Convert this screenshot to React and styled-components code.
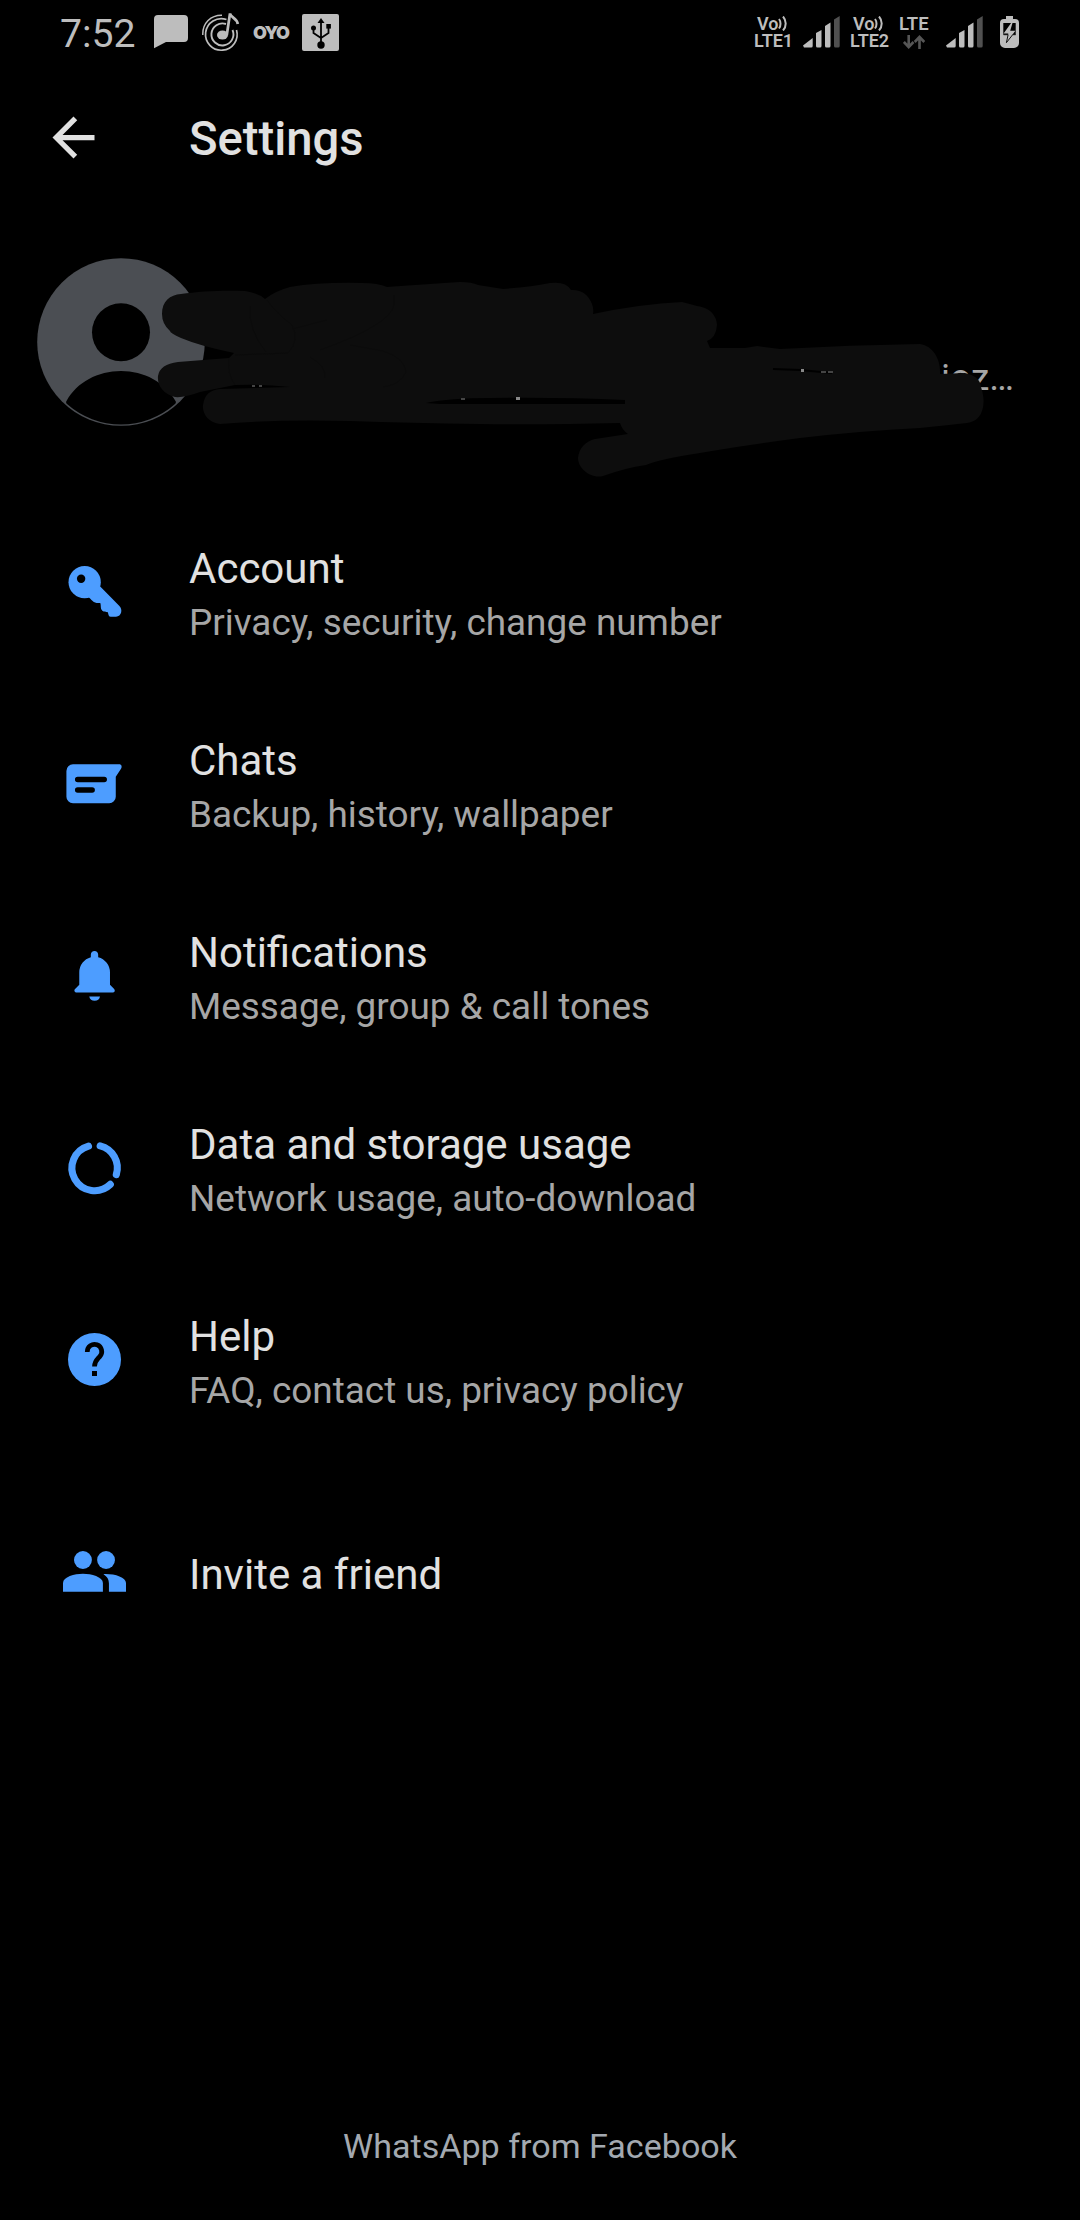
import React from 'react';
import styled, { createGlobalStyle } from 'styled-components';

const BLUE = '#4d9dff';
const SCRIBBLE = '#0d0d0d';

const items = [
  { icon: KeyIcon, title: 'Account', desc: 'Privacy, security, change number' },
  { icon: ChatIcon, title: 'Chats', desc: 'Backup, history, wallpaper' },
  { icon: BellIcon, title: 'Notifications', desc: 'Message, group & call tones' },
  { icon: DataIcon, title: 'Data and storage usage', desc: 'Network usage, auto-download' },
  { icon: HelpIcon, title: 'Help', desc: 'FAQ, contact us, privacy policy' },
];

const App = () => {
  return (
    <>
      <GlobalStyle />
      <Screen>
        <StatusBar />
        <AppBar>
          <BackButton aria-label="Back">
            <svg width="63" height="63" viewBox="0 0 24 24" fill="#e1e1e1">
              <path d="M20 11H7.83l5.59-5.59L12 4l-8 8 8 8 1.41-1.41L7.83 13H20v-2z" />
            </svg>
          </BackButton>
          <PageTitle>Settings</PageTitle>
        </AppBar>
        <Profile />
        <List>
          {items.map(({ icon: Icon, title, desc }) => (
            <Item key={title}>
              <Icon />
              <ItemText>
                <ItemTitle>{title}</ItemTitle>
                <ItemDesc>{desc}</ItemDesc>
              </ItemText>
            </Item>
          ))}
          <InviteItem>
            <FriendsIcon />
            <ItemText>
              <ItemTitle>Invite a friend</ItemTitle>
            </ItemText>
          </InviteItem>
        </List>
        <Footer>WhatsApp from Facebook</Footer>
      </Screen>
    </>
  );
};

function StatusBar() {
  return (
    <StatusRow>
      <Clock>7:52</Clock>
      <Notices>
        <svg width="35" height="34" viewBox="0 0 35 34" fill="#bdbdbd">
          <path d="M4 0h26a4 4 0 0 1 4 4v19a4 4 0 0 1-4 4H12L0 33.3V4a4 4 0 0 1 4-4z" />
        </svg>
        <MusicIcon />
        <Oyo>OYO</Oyo>
        <UsbIcon />
      </Notices>
      <Network>
        <VoLte sim="1" />
        <Signal />
        <VoLte sim="2" />
        <Lte>
          <LteLabel>LTE</LteLabel>
          <svg width="22" height="14" viewBox="0 0 22 14" fill="none" stroke="#555" strokeWidth="2.6">
            <path d="M5.7 0v12M.9 7l4.8 5 4.8-5M16.5 14V2M11.7 7l4.8-5 4.8 5" />
          </svg>
        </Lte>
        <Signal />
        <Battery />
      </Network>
    </StatusRow>
  );
}

function Battery() {
  return (
    <BatterySvg width="19" height="32" viewBox="0 0 19 32">
      <path
        d="M6 0h7v3h2a4 4 0 0 1 4 4v20a5 5 0 0 1-5 5H5a5 5 0 0 1-5-5V7a4 4 0 0 1 4-4h2z"
        fill="#bdbdbd"
      />
      <path d="M3.3 7h12.4v11.7H3.3z" fill="#000" />
      <path d="M11.8 6L3.6 17.5h4.700L6.400 26.700l9-12h-5.200L12.800 6z" fill="#bdbdbd" />
      <path d="M3.600 18.700h4.500l-1.700 8 6.300-8h3" fill="none" stroke="#111" strokeWidth="1" />
    </BatterySvg>
  );
}

function VoLte({ sim }) {
  return (
    <VoBox>
      <VoLine>
        Vo
        <svg width="10" height="15" viewBox="0 0 10 15" fill="none" stroke="#bdbdbd" strokeWidth="2">
          <path d="M1 3c2 2.5 2 7 0 9.500M5 .5c3.600 4 3.600 10 0 14" />
        </svg>
      </VoLine>
      <div>LTE{sim}</div>
    </VoBox>
  );
}

function Signal() {
  return (
    <svg width="37" height="32" viewBox="0 0 37 32" fill="#bdbdbd">
      <path d="M0 29.500L9.700 22v8a1.500 1.500 0 0 1-1.500 1.500H1z" />
      <path d="M13 17l5.500-3v16a1.500 1.500 0 0 1-1.500 1.500h-2.500A1.500 1.500 0 0 1 13 30z" />
      <path d="M22 10l5.500-3.500V30a1.500 1.500 0 0 1-1.500 1.500h-2.500A1.500 1.500 0 0 1 22 30z" />
      <path d="M31 3.500L36.700 0v30a1.500 1.500 0 0 1-1.500 1.500h-2.700A1.500 1.500 0 0 1 31 30z" fill="#505050" />
    </svg>
  );
}

function MusicIcon() {
  return (
    <svg width="38" height="40" viewBox="0 0 38 40" fill="none" stroke="#bdbdbd">
      <path d="M.8 23C.3 11 9 3 20 3.200" strokeWidth="1.500" />
      <path d="M24.500 7.500A15.800 15.800 0 1 0 34.500 18" strokeWidth="1.700" />
      <path d="M24 12A11 11 0 1 0 30.500 18" strokeWidth="1.900" />
      <ellipse cx="20.500" cy="23" rx="5.500" ry="4.500" fill="#bdbdbd" stroke="none" />
      <path d="M24.800 23L28 1.500c.5 4 7 4.500 7.800 10.500" strokeWidth="2.700" />
    </svg>
  );
}

function UsbIcon() {
  return (
    <svg width="37" height="37" viewBox="0 0 37 37">
      <rect width="37" height="37" rx="2" fill="#bdbdbd" />
      <path d="M19 31V7M11.500 14v5l7.500 5M26.500 12v7L19 24" fill="none" stroke="#000" strokeWidth="1.800" />
      <path d="M19 4l3.500 5h-7z" />
      <circle cx="19" cy="31" r="3.700" />
      <circle cx="11.500" cy="14" r="2.500" />
      <path d="M24.300 10h4.600v4.600h-4.600z" />
    </svg>
  );
}

function Profile() {
  return (
    <ProfileRow>
      <svg width="168" height="168" viewBox="0 0 168 168">
        <circle cx="84" cy="84" r="83.800" fill="#4b4e53" />
        <circle cx="84" cy="74.300" r="29" fill="#000" />
        <path d="M29.500 143C40 124 61 113 84 113s44 11 54.500 30q1 1.500-.5 3A81.500 81.500 0 0 1 30 146q-1.500-1.500-.5-3z" fill="#000" />
      </svg>
      <AboutText>ioz…</AboutText>
      <Scribble viewBox="150 270 850 220">
        <path
          fill={SCRIBBLE}
          d="M162 314C162 301 170 295 181 294C200 291 225 290 245 291Q258 293 265 299Q275 291 290 287Q320 282 362 283Q378 283 387 287Q430 284 460 282Q472 282 478 285L503 289Q530 287 550 283Q566 281 571 290Q586 289 592 304Q594 309 593 314Q640 304 682 302Q690 304 697 306C713 308 717 319 717 325Q716 338 707 341L710 348L745 348L757 346L780 349Q850 345 920 344C934 346 941 361 940 374L965 373Q980 376 981 387C988 408 980 422 967 423Q950 425 920 428Q860 431 800 438Q740 446 700 453Q660 459 646 465Q625 468 603 476C590 479 578 468 578 458C579 448 586 441 595 439L628 434Q622 430 620 423Q540 425 480 424Q410 423 350 421Q280 419 220 424C209 423 202 414 203 405Q205 390 220 389L290 387Q263 384 235 385L200 392Q184 398 175 397C163 394 157 385 158 376Q160 364 178 362L229 358L234 353Q200 346 181 338Q170 333 170 331Q162 324 162 314Z"
        />
        <path d="M426 403Q450 398 490 398Q560 397 625 400V404H440Z" fill="#000" />
        <path d="M773 369L800 370L832 373" stroke="#000" strokeWidth="2" fill="none" />
        <g fill="none" stroke="#0b0b0b">
          <path d="M250 306Q248 330 266 352M267 300Q276 313 292 325Q300 340 288 353L235 355M292 329L327 320M320 350Q390 325 394 305V295M350 345L383 351Q405 358 406 372Q400 385 383 387" />
          <path d="M229 358Q227 374 235 385M310 357Q326 366 325 378" />
        </g>
        <path d="M252 386h3M259 386h3M461 399h4M821 372h5M828 372h5" stroke="#444" strokeWidth="2" />
        <path d="M516 398.500h4M801 370.500h3" stroke="#888" strokeWidth="3" />
      </Scribble>
    </ProfileRow>
  );
}

function KeyIcon() {
  return (
    <ItemIcon viewBox="0 0 24 24">
      <circle cx="8.250" cy="8.450" r="6.150" />
      <path d="M14 9.900l7.400 7.500c1.500 1.500.9 4-1.200 4.200h-2c-.8 0-.9-.7-1.100-1.700-.9-.2-1.400 0-2.100-.6-.9-.7-.4-1.900-.8-2.900-1-.1-1.800.1-2.600-.5-.6-.4-.8-.9-1.800-1.700z" />
      <circle cx="6.900" cy="7.150" r="1.600" fill="#000" />
    </ItemIcon>
  );
}

function ChatIcon() {
  return (
    <ItemIcon viewBox="0 0 24 24">
      <path d="M3.800 4.700h17.600c.9 0 1.200.9.700 1.700l-2 3v7.600a2.500 2.500 0 0 1-2.500 2.500H3.800A2.500 2.500 0 0 1 1.300 17V7.200a2.500 2.500 0 0 1 2.500-2.500z" />
      <path d="M5.600 10.500h10.100M5.600 14.500h5.500" stroke="#000" strokeWidth="2.100" strokeLinecap="round" />
    </ItemIcon>
  );
}

function BellIcon() {
  return (
    <ItemIcon viewBox="0 0 24 24">
      <path d="M12 2.700c.8 0 1.400.6 1.400 1.400v.9a6 6 0 0 1 4.500 5.800v4.700l1.500 1.500c.7.700.2 1.500-.6 1.500H5.300c-.9 0-1.300-.9-.6-1.500l1.500-1.500v-4.700A6 6 0 0 1 10.600 5v-.9c0-.8.6-1.400 1.400-1.400z" />
      <path d="M10 20h4.100a2.100 2.100 0 0 1-4.100 0z" />
    </ItemIcon>
  );
}

function DataIcon() {
  return (
    <ItemIcon viewBox="0 0 24 24">
      <g fill="none" stroke={BLUE} strokeWidth="2.700" strokeLinecap="round">
        <path d="M9.720 3.850A8.650 8.650 0 1 0 18.030 18.430" />
        <path d="M14.150 3.780A8.650 8.650 0 0 1 20.300 14.730" />
      </g>
    </ItemIcon>
  );
}

function HelpIcon() {
  return (
    <ItemIcon viewBox="0 0 24 24">
      <circle cx="12" cy="12" r="10.100" />
      <path d="M9.250 9.100v-.1a2.750 2.750 0 1 1 4.800 1.800C13 12 12 12.600 12 14.700" fill="none" stroke="#000" strokeWidth="1.800" />
      <path d="M11.050 16.400h1.900v1.850h-1.900z" fill="#000" />
    </ItemIcon>
  );
}

function FriendsIcon() {
  return (
    <ItemIcon viewBox="0 0 24 24">
      <circle cx="7.600" cy="7.600" r="3.400" />
      <circle cx="16.400" cy="7.600" r="3.400" />
      <path d="M0 19.700v-3.300c0-2.300 4.400-3.500 7.600-3.500s7.600 1.200 7.600 3.500v3.300z" />
      <path d="M15.400 13c1.500.9 2.100 2 2.100 3.600v3.100H24v-3.300c0-2.300-4.600-3.600-8.600-3.400z" />
    </ItemIcon>
  );
}

const GlobalStyle = createGlobalStyle`
  * {
    box-sizing: border-box;
  }

  body {
    margin: 0;
    background: #000;
    font-family: Roboto, sans-serif;
  }

  svg {
    display: block;
    flex-shrink: 0;
  }
`;

const Screen = styled.div`
  display: flex;
  flex-direction: column;
  width: 1080px;
  height: 2220px;
  background: #000;
  overflow: hidden;
`;

const StatusRow = styled.div`
  display: flex;
  align-items: center;
  height: 64px;
  padding: 0 61px 0 60px;
  color: #bdbdbd;
`;

const Clock = styled.div`
  width: 94px;
  font-size: 39.2px;
  line-height: 64px;
  padding-top: 3px;
`;

const Notices = styled.div`
  display: flex;
  align-items: center;
  gap: 13px;
`;

const Oyo = styled.span`
  width: 36px;
  padding-top: 1px;
  font-family: Inter, sans-serif;
  font-size: 18px;
  font-weight: 900;
  letter-spacing: -1.6px;
  line-height: 20px;
`;

const Network = styled.div`
  display: flex;
  align-items: center;
  margin-left: auto;
`;

const BatterySvg = styled.svg`
  margin-left: 17px;
`;

const VoBox = styled.div`
  width: 40px;
  margin: 0 9px 0 10px;
  font-size: 18px;
  font-weight: 600;
  line-height: 17px;
`;

const VoLine = styled.div`
  display: flex;
  align-items: center;
  padding-left: 3px;
`;

const Lte = styled.div`
  display: flex;
  flex-direction: column;
  align-items: center;
  gap: 2px;
  margin-right: 17px;
`;

const LteLabel = styled.span`
  width: 30px;
  font-size: 18.5px;
  font-weight: 600;
  line-height: 18px;
`;

const AppBar = styled.header`
  display: flex;
  align-items: center;
  height: 146px;
  padding: 0 42px;
`;

const BackButton = styled.button`
  border: 0;
  padding: 0;
  margin-right: 84px;
  background: none;
`;

const PageTitle = styled.h1`
  margin: 0;
  padding-top: 4px;
  color: #e1e1e1;
  font-size: 47.2px;
  font-weight: 500;
`;

const ProfileRow = styled.section`
  position: relative;
  display: flex;
  justify-content: space-between;
  align-items: center;
  height: 263px;
  padding: 0 66px 0 37px;
`;

const AboutText = styled.span`
  padding-top: 73px;
  color: #a6a6a6;
  font-size: 37px;
  line-height: 44px;
`;

/* marker strokes lying over the name and the about line */
const Scribble = styled.svg`
  position: absolute;
  left: 150px;
  top: 60px;
  width: 850px;
  height: 220px;
`;

const List = styled.main`
  padding-top: 22px;
`;

const Item = styled.div`
  display: flex;
  align-items: center;
  gap: 63px;
  height: 192px;
  padding: 0 63px;
`;

const InviteItem = styled(Item)`
  margin-top: 20px;
`;

const ItemIcon = styled.svg`
  width: 63px;
  height: 63px;
  fill: ${BLUE};
`;

const ItemText = styled.div`
  padding-top: 8px;
`;

const ItemTitle = styled.div`
  color: #e1e1e1;
  font-size: 42px;
  line-height: 56px;
`;

const ItemDesc = styled.div`
  color: #a6a6a6;
  font-size: 36.9px;
  line-height: 52px;
`;

const Footer = styled.footer`
  margin-top: auto;
  padding-bottom: 49px;
  color: #a3a9b0;
  font-size: 34.1px;
  line-height: 50px;
  text-align: center;
`;

export default App;
